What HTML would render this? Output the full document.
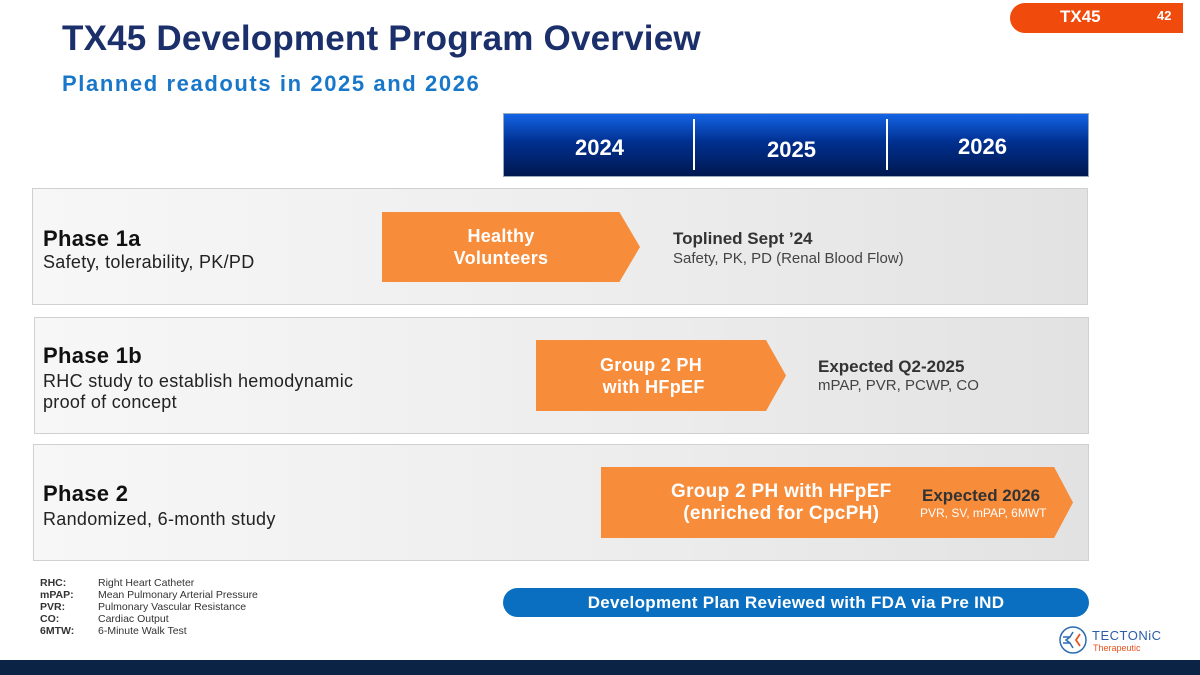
<!DOCTYPE html>
<html><head><meta charset="utf-8"><style>
*{margin:0;padding:0;box-sizing:border-box}
body{width:1200px;height:675px;position:relative;background:#fff;font-family:"Liberation Sans",sans-serif;overflow:hidden}
.a{position:absolute}
.box{position:absolute;border:1px solid #d0d0d0;background:linear-gradient(90deg,#f7f7f7,#ececec 60%,#e2e2e2)}
.arrow{position:absolute;background:#f78c3a;color:#fff;font-weight:bold;font-size:18px;text-align:center;display:flex;align-items:center;justify-content:center;line-height:22px;letter-spacing:0.3px}
.ph{position:absolute;font-size:22px;font-weight:bold;color:#111;letter-spacing:0.3px}
.sub{position:absolute;font-size:18px;color:#222;line-height:21px;letter-spacing:0.3px}
.rt{position:absolute;font-size:17px;font-weight:bold;color:#333}
.rs{position:absolute;font-size:15px;color:#444}
.yr{position:absolute;color:#fff;font-weight:bold;font-size:22px}
.leg{position:absolute;left:40px;top:577px;font-size:10.5px;color:#333;line-height:12px}
.leg b{display:inline-block;width:58px}
</style></head><body>
<div class="a" style="left:1010px;top:3px;width:173px;height:30px;background:#f04a0c;border-radius:15px 0 0 15px"></div>
<div class="a" style="left:1060px;top:7px;color:#fff;font-weight:bold;font-size:17px">TX45</div>
<div class="a" style="left:1157px;top:8px;color:#fff;font-weight:bold;font-size:13px">42</div>
<div class="a" style="left:62px;top:19px;font-size:35px;font-weight:bold;color:#1b2f6b;letter-spacing:0.2px">TX45 Development Program Overview</div>
<div class="a" style="left:62px;top:71px;font-size:22px;font-weight:bold;color:#1877c9;letter-spacing:1.6px">Planned readouts in 2025 and 2026</div>

<div class="a" style="left:503px;top:113px;width:586px;height:64px;background:linear-gradient(180deg,#1464e6,#003090 45%,#001850);border:1px solid #9ab"></div>
<div class="a" style="left:693px;top:119px;width:2px;height:51px;background:#fff"></div>
<div class="a" style="left:886px;top:119px;width:2px;height:51px;background:#fff"></div>
<div class="yr" style="left:575px;top:135px">2024</div>
<div class="yr" style="left:767px;top:137px">2025</div>
<div class="yr" style="left:958px;top:134px">2026</div>

<div class="box" style="left:32px;top:188px;width:1056px;height:117px"></div>
<div class="arrow" style="left:382px;top:212px;width:258px;height:70px;clip-path:polygon(0 0,92% 0,100% 50%,92% 100%,0 100%);padding-right:20px">Healthy<br>Volunteers</div>
<div class="ph" style="left:43px;top:226px">Phase 1a</div>
<div class="sub" style="left:43px;top:252px">Safety, tolerability, PK/PD</div>
<div class="rt" style="left:673px;top:229px">Toplined Sept ’24</div>
<div class="rs" style="left:673px;top:250px">Safety, PK, PD (Renal Blood Flow)</div>

<div class="box" style="left:34px;top:317px;width:1055px;height:117px"></div>
<div class="arrow" style="left:536px;top:340px;width:250px;height:71px;clip-path:polygon(0 0,92% 0,100% 50%,92% 100%,0 100%);padding-right:20px">Group 2 PH<br>&nbsp;with HFpEF</div>
<div class="ph" style="left:43px;top:343px">Phase 1b</div>
<div class="sub" style="left:43px;top:371px">RHC study to establish hemodynamic<br>proof of concept</div>
<div class="rt" style="left:818px;top:357px">Expected Q2-2025</div>
<div class="rs" style="left:818px;top:377px">mPAP, PVR, PCWP, CO</div>

<div class="box" style="left:33px;top:444px;width:1056px;height:117px"></div>
<div class="arrow" style="left:601px;top:467px;width:472px;height:71px;clip-path:polygon(0 0,96% 0,100% 50%,96% 100%,0 100%);justify-content:flex-start;padding-left:70px;text-align:center;font-size:19px">Group 2 PH with HFpEF<br>(enriched for CpcPH)</div>
<div class="ph" style="left:43px;top:481px">Phase 2</div>
<div class="sub" style="left:43px;top:509px">Randomized, 6-month study</div>
<div class="rt" style="left:922px;top:486px;color:#333">Expected 2026</div>
<div class="a" style="left:920px;top:506px;font-size:12px;color:#fff">PVR, SV, mPAP, 6MWT</div>

<div class="leg"><b>RHC:</b>Right Heart Catheter<br><b>mPAP:</b>Mean Pulmonary Arterial Pressure<br><b>PVR:</b>Pulmonary Vascular Resistance<br><b>CO:</b>Cardiac Output<br><b>6MTW:</b>6-Minute Walk Test</div>

<div class="a" style="left:503px;top:588px;width:586px;height:29px;background:#0a6fc0;border-radius:15px;color:#fff;font-weight:bold;font-size:17px;text-align:center;line-height:29px;letter-spacing:0.3px">Development Plan Reviewed with FDA via Pre IND</div>

<svg class="a" style="left:1058px;top:625px" width="30" height="30" viewBox="0 0 30 30"><circle cx="15" cy="15" r="13" fill="none" stroke="#2a6db0" stroke-width="1.5"/><path d="M5 12h7l3-5M5 18h7l3 5M12 12l-4 3 4 3" fill="none" stroke="#2a6db0" stroke-width="1.5"/><path d="M22 9l-4 6 4 6" fill="none" stroke="#e8541e" stroke-width="1.8"/></svg>
<div class="a" style="left:1092px;top:628px;font-size:13px;color:#2a5ea8;letter-spacing:0.5px">TECTONiC</div>
<div class="a" style="left:1093px;top:643px;font-size:9px;color:#e8541e">Therapeutic</div>
<div class="a" style="left:0;top:660px;width:1200px;height:15px;background:#0b2345"></div>
</body></html>
